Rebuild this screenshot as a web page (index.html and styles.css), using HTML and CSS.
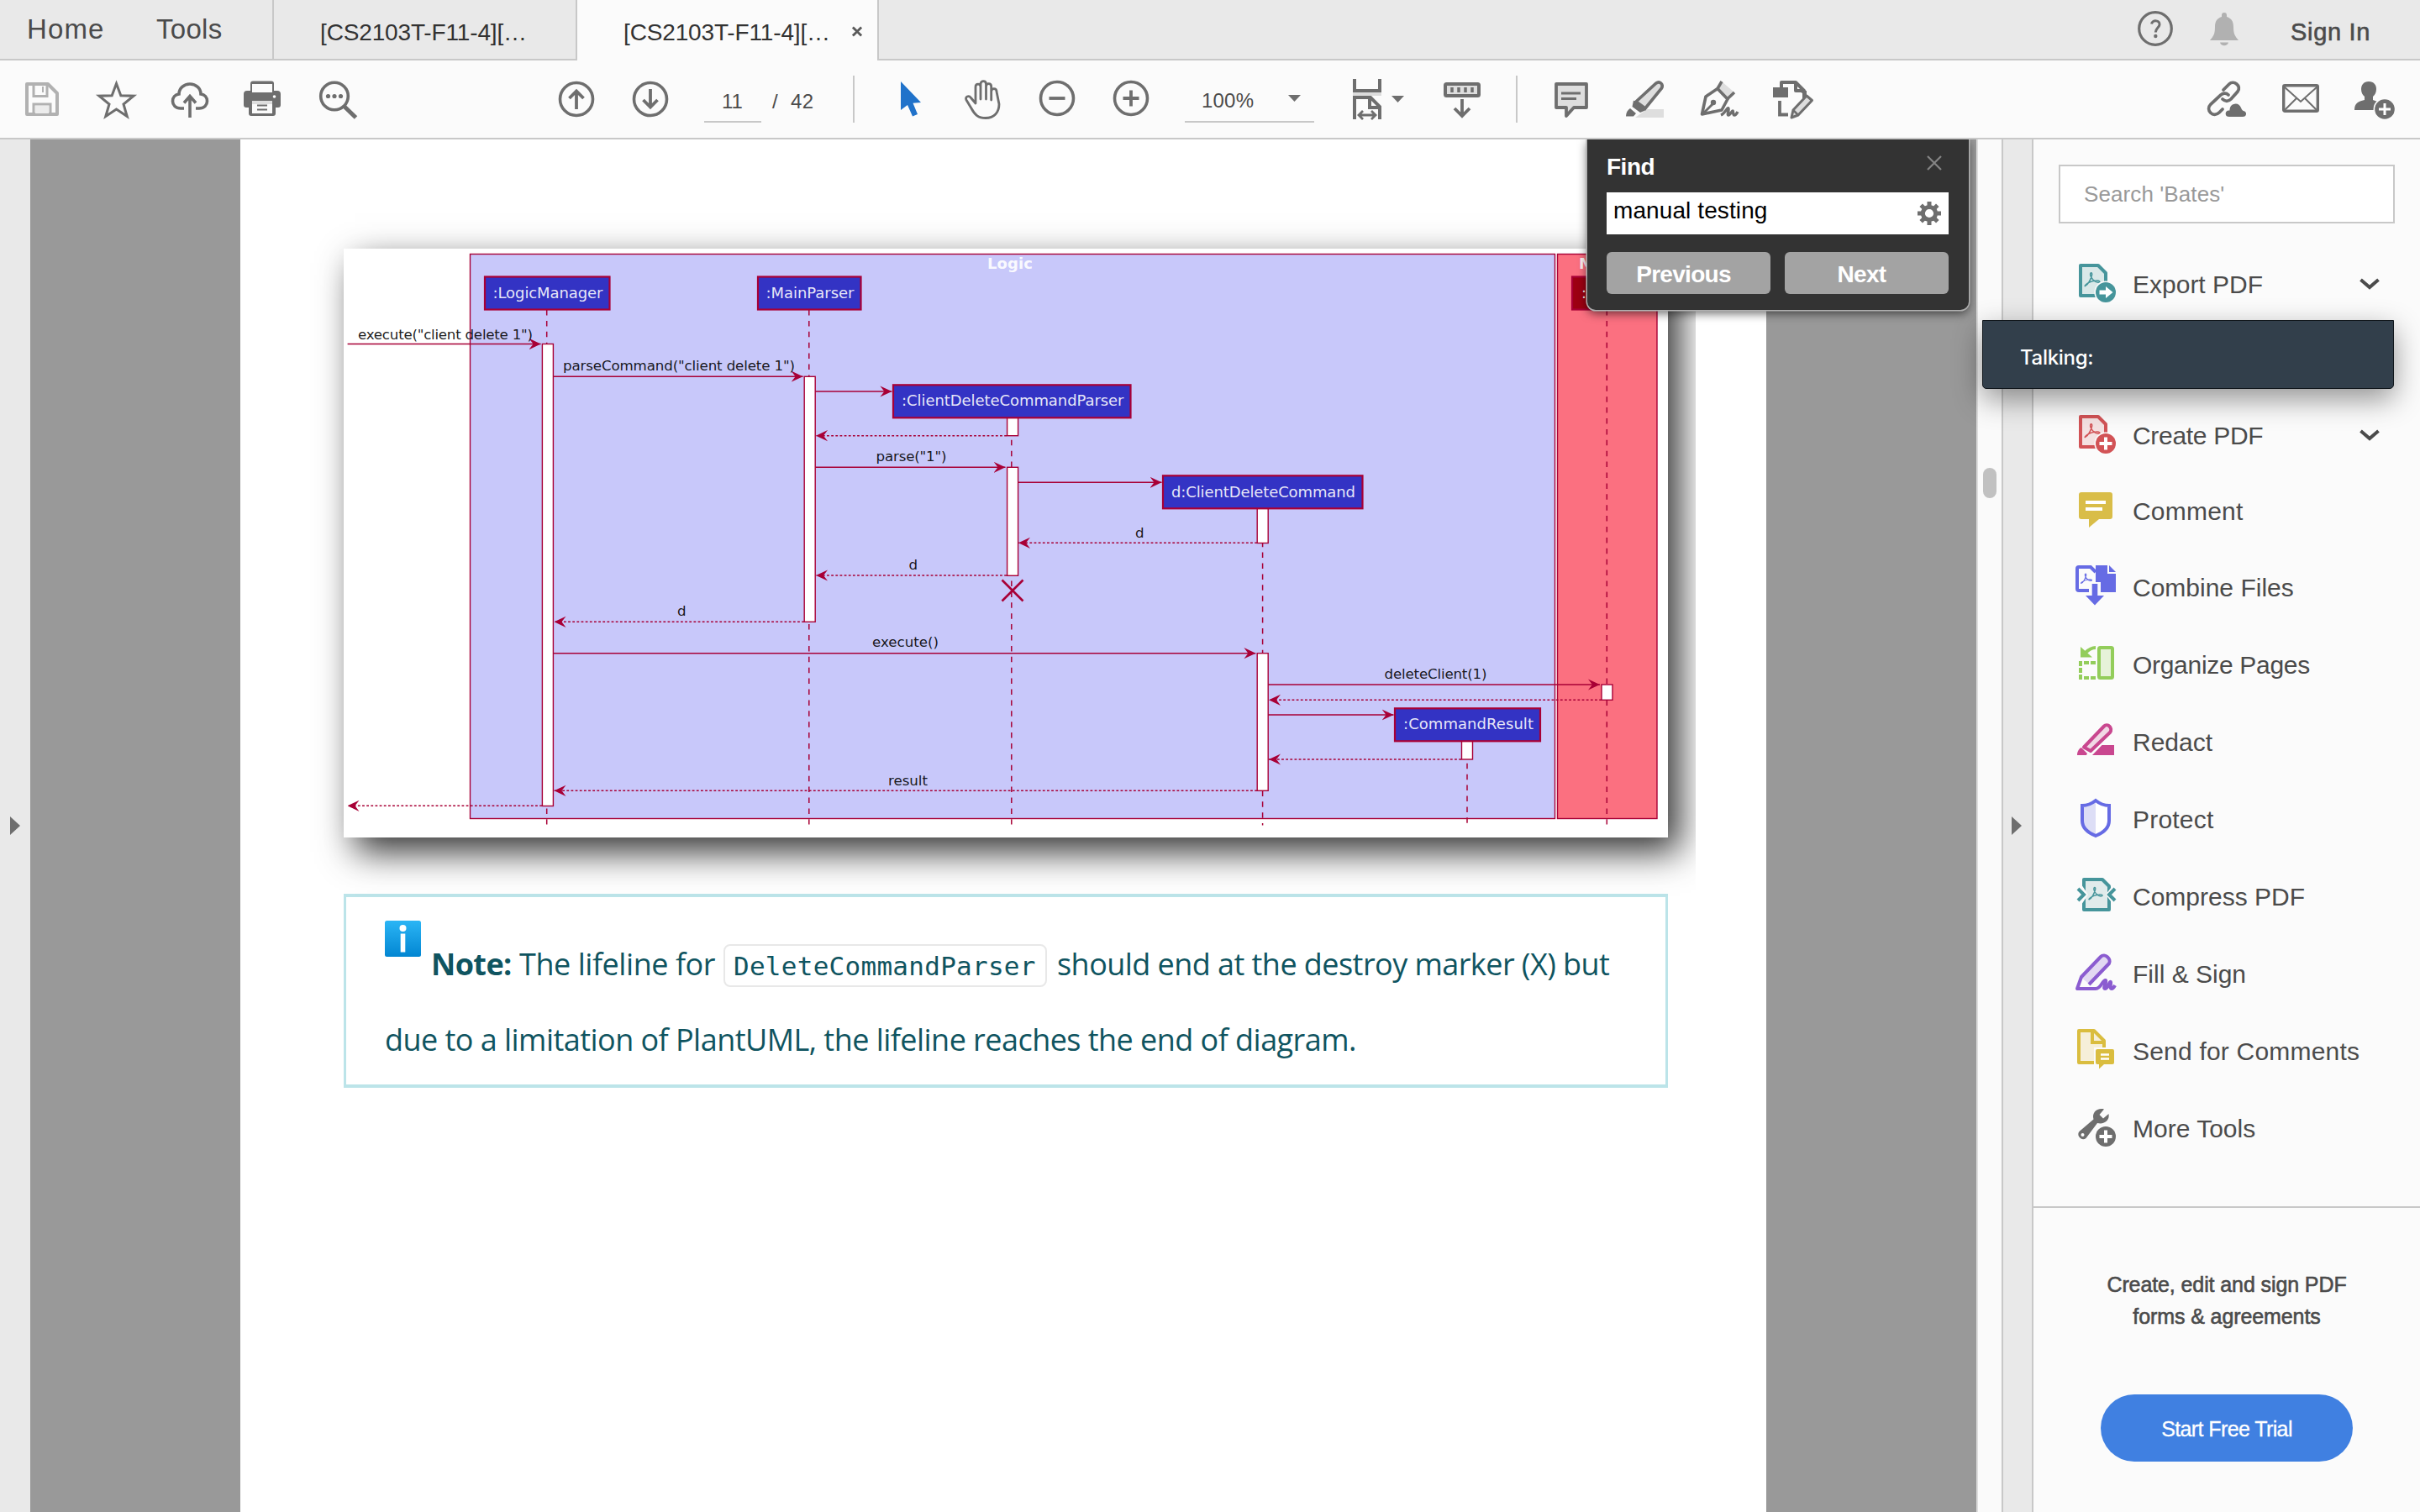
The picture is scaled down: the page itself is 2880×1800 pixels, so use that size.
FILE: index.html
```html
<!DOCTYPE html>
<html lang="en">
<head>
<meta charset="utf-8">
<title>Document viewer</title>
<link rel="stylesheet" href="styles.css">
</head>
<body>
<svg class="defs" width="0" height="0">
  <defs>
    <symbol id="acro" viewBox="0 0 24 24">
      <path d="M3 20c3-1 7-8 8.500-14 .8-4-2.500-4-2 0C10.500 11 16 16 20 15.500c3.500-.5 1-3-3-2.300C12 13.800 7 15.500 4 18c-2 1.800-1.800 2.500-1 2z" fill="none" stroke="currentColor" stroke-width="1.700"/>
    </symbol>
    <marker id="head" viewBox="0 0 14 14" refX="14" refY="7" markerWidth="14" markerHeight="14" markerUnits="userSpaceOnUse" orient="auto">
      <path d="M0 .4 14 7 0 13.600 5 7z" fill="#a80036"/>
    </marker>
  </defs>
</svg>

<header class="tabs">
  <nav class="home"><span class="nav-home">Home</span><span class="nav-tools">Tools</span></nav>
  <div class="tab"><span class="tab-name">[CS2103T-F11-4][…</span></div>
  <div class="tab active"><span class="tab-name">[CS2103T-F11-4][…</span>
    <svg class="tab-close" viewBox="0 0 14 14"><path d="M1.500 1.500l11 11M12.500 1.500l-11 11" stroke="#5a5a5a" stroke-width="3"/></svg>
  </div>
  <div class="account">
    <svg class="help" viewBox="0 0 42 42"><circle cx="21" cy="21" r="19.300" fill="none" stroke="#6e6e6e" stroke-width="3.200"/><path d="M16.500 15.500c1-5.500 10.500-4.500 9.500 1-.6 3.500-4.500 4-4.700 9" fill="none" stroke="#6e6e6e" stroke-width="3"/><circle cx="21.300" cy="30" r="2.200" fill="#6e6e6e"/></svg>
    <svg class="bell" viewBox="0 0 34 40"><path d="M14 3a3 3 0 0 1 6 0v2c6 2 8 6 8 12 0 9 2 11 6 16H0c4-5 6-7 6-16C6 11 8 7 14 5zM12 35.500h10c-1 5-9 5-10 0z" fill="#b1b1b1"/></svg>
    <span class="signin">Sign In</span>
  </div>
</header>

<div class="toolbar">
  <div class="group g-file">
    <svg class="ico" viewBox="0 0 48 48"><path d="M6 6h25l11 11v25H6z" fill="none" stroke="#b1b1b1" stroke-width="4" stroke-linejoin="round"/><path d="M14 6v14.500h16V6M14 42V30h20v12" fill="none" stroke="#b1b1b1" stroke-width="3"/><path d="M16 32h16v9H16z" fill="#ececec"/><path d="M25 9v7" stroke="#b1b1b1" stroke-width="2"/></svg>
    <svg class="ico" viewBox="0 0 48 48"><path d="M24.500 5.500l5.300 14.300 15.200.4L33 30l4.200 14.500L24.500 36 11.800 44.500 16 30 4 20.200l15.200-.4z" fill="none" stroke="#6e6e6e" stroke-width="3"/></svg>
    <svg class="ico" viewBox="0 0 48 48"><path d="M17 35h-4C7 35 3.500 31 3.500 26.500c0-4.500 3-8 7.500-8.500C11 11 17 6 24 6s13 5 13 12c4.500.5 7.500 4 7.500 8.500C44.500 31 41 35 35 35h-4" fill="none" stroke="#6e6e6e" stroke-width="3.600"/><path d="M24 46V22M17 28.500l7-8 7 8" fill="none" stroke="#6e6e6e" stroke-width="3.600"/></svg>
    <svg class="ico" viewBox="0 0 48 48"><path d="M8 14V5.500A3 3 0 0 1 11 2.500h22a3 3 0 0 1 3 3V14h4a4 4 0 0 1 4 4v13a3 3 0 0 1-3 3h-3v7a3 3 0 0 1-3 3H9a3 3 0 0 1-3-3v-7H3a3 3 0 0 1-3-3V18a4 4 0 0 1 4-4z" fill="#6e6e6e"/><path d="M10 6h24v10H10zM10 29h24v12H10z" fill="#fbfbfb"/><path d="M10 26h24v4H10z" fill="#dedede"/><path d="M16 31.500h12M16 36.500h12" stroke="#6e6e6e" stroke-width="2.200"/><circle cx="36.500" cy="21" r="1.800" fill="#fff"/></svg>
    <svg class="ico" viewBox="0 0 48 48"><circle cx="20" cy="20.500" r="16.300" fill="none" stroke="#6e6e6e" stroke-width="3.600"/><path d="M31 32l14.500 14" stroke="#6e6e6e" stroke-width="5"/><g fill="#6e6e6e"><circle cx="12.500" cy="20.500" r="2.600"/><circle cx="20" cy="20.500" r="2.600"/><circle cx="27.500" cy="20.500" r="2.600"/></g></svg>
  </div>
  <div class="group g-page">
    <svg class="ico" viewBox="0 0 48 48"><circle cx="24" cy="24" r="19.500" fill="none" stroke="#6e6e6e" stroke-width="3.600"/><path d="M24 36V14M15.500 23l8.500-8.500 8.500 8.500" fill="none" stroke="#6e6e6e" stroke-width="3.800"/></svg>
    <svg class="ico" viewBox="0 0 48 48"><circle cx="24" cy="24" r="19.500" fill="none" stroke="#6e6e6e" stroke-width="3.600"/><path d="M24 12v22M15.500 25l8.500 8.500 8.500-8.500" fill="none" stroke="#6e6e6e" stroke-width="3.800"/></svg>
    <span class="field page-no">11</span><span class="page-slash">/</span><span class="page-total">42</span>
  </div>
  <i class="divider"></i>
  <div class="group g-zoom">
    <svg class="ico" viewBox="0 0 48 48"><path d="M14 3l24 25-9.500.8L34 42l-6 2.500-6-13.500-8 6z" fill="#2072ca"/></svg>
    <svg class="ico" viewBox="0 0 48 48"><path d="M15 27V9.500c0-4.500 6-4.500 6 0V6c0-4.500 6.500-4.500 6.500 0v3c0-4.500 6.200-4.500 6.200 0v6c0-4.500 6.300-4.500 6.300 0L43 30c0 10-6 16.500-16 16.500-9 0-13-4-17-11.500L4 25c-2-4 3-6 5.500-2.500L15 29zM21 9.500V24M27.500 9V24M33.700 14v11" fill="none" stroke="#6e6e6e" stroke-width="2.800" stroke-linejoin="round" stroke-linecap="round"/></svg>
    <svg class="ico" viewBox="0 0 48 48"><circle cx="24" cy="23" r="19.500" fill="none" stroke="#6e6e6e" stroke-width="3.600"/><path d="M14.500 23h19" stroke="#6e6e6e" stroke-width="3.800"/></svg>
    <svg class="ico" viewBox="0 0 48 48"><circle cx="24" cy="23" r="19.500" fill="none" stroke="#6e6e6e" stroke-width="3.600"/><path d="M14.500 23h19M24 13.500v19" stroke="#6e6e6e" stroke-width="3.800"/></svg>
    <div class="field zoom-level"><span>100%</span><svg class="caret" viewBox="0 0 15 8"><path d="M0 0h15L7.500 8z" fill="#6e6e6e"/></svg></div>
  </div>
  <div class="group g-view">
    <svg class="ico fit" viewBox="0 0 48 48"><path d="M9 0v14h30V0" fill="none" stroke="#6e6e6e" stroke-width="4"/><path d="M7 16h34v4H7z" fill="#dcdcdc"/><path d="M9 48V22h19l11 11v15M27 22v12h12" fill="none" stroke="#6e6e6e" stroke-width="4"/><path d="M14 43h20M19 38l-5 5 5 5M29 38l5 5-5 5" fill="none" stroke="#6e6e6e" stroke-width="2.800"/></svg>
    <svg class="caret fit-caret" viewBox="0 0 15 8"><path d="M0 0h15L7.500 8z" fill="#6e6e6e"/></svg>
    <svg class="ico keys" viewBox="0 0 48 48"><rect x="4" y="6" width="40" height="14" rx="1.500" fill="#dedede" stroke="#6e6e6e" stroke-width="4"/><path d="M12 10v6M20 10v6M28 10v6M36 10v6" stroke="#6e6e6e" stroke-width="3.500"/><path d="M24 24v19M15 35l9 9 9-9" fill="none" stroke="#6e6e6e" stroke-width="3.800"/></svg>
  </div>
  <i class="divider"></i>
  <div class="group g-mark">
    <svg class="ico" viewBox="0 0 48 48"><path d="M6 6h36v28H27l-9 10V34H6z" fill="#dedede" stroke="#6e6e6e" stroke-width="3.800" stroke-linejoin="round"/><path d="M12 17h23M12 23.500h18" stroke="#6e6e6e" stroke-width="3"/></svg>
    <svg class="ico" viewBox="0 0 48 48"><path d="M26 36h20v10H12z" fill="#dedede"/><path d="M13 27L37 5c4-3 9 1 6.500 6L24 35z" fill="#dedede" stroke="#6e6e6e" stroke-width="3.600"/><path d="M10 25.500L25 37l-7 3-9.500-7zM6 35l7 6-3 3.500H1C1 40 3 37 6 35z" fill="#6e6e6e"/></svg>
    <svg class="ico" viewBox="0 0 48 48"><path d="M27 3l15 13-7 7-14-12z" fill="#dedede"/><path d="M27 3l-5 8.500M42 16l-8 7.500" stroke="#6e6e6e" stroke-width="3.500"/><path d="M3.500 42L8 21l14-9.500L34 24l-7 13z" fill="none" stroke="#6e6e6e" stroke-width="3.600" stroke-linejoin="round"/><path d="M4 42l13-13" stroke="#6e6e6e" stroke-width="3"/><circle cx="17" cy="28" r="3.200" fill="#6e6e6e"/><path d="M26 43c5-2 8-10 9-8s-2 8 0 8 4-5 5-5 0 5 2 5 3-2 4-4" fill="none" stroke="#6e6e6e" stroke-width="3.400"/></svg>
    <svg class="ico" viewBox="0 0 48 48"><path d="M10 10V4h17l10 10v9M27 4v10h10" fill="none" stroke="#6e6e6e" stroke-width="4" stroke-linejoin="round"/><path d="M0 10h18v12H0zM30 14h10v6z" fill="#6e6e6e"/><path d="M8 26v16.500h10" fill="none" stroke="#6e6e6e" stroke-width="3.800"/><path d="M22 46l2-9 16-17 6.500 5.500L30 43z" fill="#dedede" stroke="#6e6e6e" stroke-width="3" stroke-linejoin="round"/><path d="M24 37l6 6" stroke="#6e6e6e" stroke-width="2.500"/></svg>
  </div>
  <div class="group g-share">
    <svg class="ico" viewBox="0 0 48 48"><g fill="none" stroke="#6e6e6e" stroke-width="3.800" stroke-linecap="round"><path d="M20 13l7-7c5-5 15 2 10 9l-8 9c-3 3-7 3-10 0"/><path d="M26 19c-3-3-7-2-9 0L5 30c-7 7 3 17 10 10l4-4"/></g><path d="M27 46c-7 0-7-9-.5-9.500C27 28 38 25 42 34c1 2 .5 2.500 2 3 6 1.500 5 9-1 9z" fill="#6e6e6e" stroke="#fbfbfb" stroke-width="2"/></svg>
    <svg class="ico" viewBox="0 0 48 48"><rect x="3.700" y="7.700" width="40.600" height="30.600" rx="1.500" fill="none" stroke="#6e6e6e" stroke-width="3.400"/><path d="M4 9l20 18L44 9M4 38l15-15M44 38L29 23" fill="none" stroke="#6e6e6e" stroke-width="2"/></svg>
    <svg class="ico" viewBox="0 0 48 48"><path d="M17 3c6 0 9 4 9 9 0 4-1.500 7-4 9v4l8 3-5 9H0c0-8 4-10 12-12v-4c-2.500-2-4-5-4-9 0-5 3-9 9-9z" fill="#6e6e6e"/><circle cx="36" cy="36" r="13.500" fill="#fbfbfb"/><circle cx="36" cy="36" r="11.800" fill="#6e6e6e"/><path d="M29 36h14M36 29v14" stroke="#fff" stroke-width="3"/></svg>
  </div>
</div>

<main class="workspace">
  <div class="rail"><svg class="rail-arrow" viewBox="0 0 12 22"><path d="M0 0l12 11L0 22z" fill="#6e6e6e"/></svg></div>
  <section class="canvas">
    <article class="page">
      <figure class="diagram">
        <svg width="1576" height="701" viewBox="409 296 1576 701">
          <rect x="559.500" y="302.500" width="1291" height="672" fill="#c8c8fa" stroke="#a80036" stroke-width="1.400"/>
          <rect x="1853.500" y="302.500" width="118.500" height="672" fill="#fb7080" stroke="#a80036" stroke-width="1.400"/>
          <g class="frame-name"><text x="1175" y="320" textLength="54">Logic</text><text x="1879" y="320" textLength="62">Model</text></g>
          <g class="life">
            <path d="M650.700 369V981.500M962.800 369V981.500M1203.800 498V981.500M1502.600 606V982.500M1746 883V981M1912.300 369V981.500"/>
          </g>
          <g class="act">
            <rect x="645.400" y="409.500" width="13" height="550"/>
            <rect x="957.200" y="448.300" width="13" height="292"/>
            <rect x="1198.600" y="490" width="13" height="28.700"/>
            <rect x="1198.600" y="556.300" width="13" height="129"/>
            <rect x="1496.200" y="600" width="13" height="46.500"/>
            <rect x="1496.200" y="777.700" width="13" height="163.600"/>
            <rect x="1739.500" y="878" width="13" height="26"/>
            <rect x="1906" y="815" width="13" height="18.300"/>
          </g>
          <g class="obj">
            <rect x="577" y="329.500" width="148.500" height="39"/>
            <rect x="902" y="329.500" width="122.500" height="39"/>
            <rect x="1063" y="458.300" width="282.500" height="39"/>
            <rect x="1384" y="566.300" width="237.500" height="39"/>
            <rect x="1660" y="843.300" width="173" height="39"/>
            <rect class="model" x="1871" y="329.500" width="83" height="39"/>
          </g>
          <g class="obj-name">
            <text x="586.500" y="355" textLength="131">:LogicManager</text>
            <text x="911.500" y="355" textLength="105">:MainParser</text>
            <text x="1073" y="483.300" textLength="264.500">:ClientDeleteCommandParser</text>
            <text x="1394" y="591.500" textLength="219">d:ClientDeleteCommand</text>
            <text x="1670" y="868.300" textLength="155">:CommandResult</text>
            <text x="1882" y="355" textLength="62">:Model</text>
          </g>
          <g class="msg">
            <path d="M413.600 409.500H643.600"/><path d="M659 448.200H955.600"/><path d="M970.400 466H1061.400"/><path d="M970.400 556.300H1196.500"/><path d="M1211.600 574.300H1382.500"/><path d="M659 777.700H1494.400"/><path d="M1509 815H1904"/><path d="M1509 851H1658.500"/>
          </g>
          <g class="msg back">
            <path d="M1198 518.700H971"/><path d="M1496 646.300H1212"/><path d="M1198 685H971"/><path d="M957 740.300H659.500"/><path d="M1906 833.300H1510"/><path d="M1739 904H1510"/><path d="M1496 941.300H659.500"/><path d="M645 959.300H413.500"/>
          </g>
          <path d="M1192.500 690.500l25 25M1217.500 690.500l-25 25" stroke="#a80036" stroke-width="2.600"/>
          <g class="label">
            <text x="426" y="404" textLength="208">execute("client delete 1")</text>
            <text x="670" y="441.300" textLength="276">parseCommand("client delete 1")</text>
            <text x="1042.500" y="549.300" textLength="84">parse("1")</text>
            <text x="1351" y="640">d</text>
            <text x="1081.500" y="677.700">d</text>
            <text x="806" y="733.300">d</text>
            <text x="1038" y="770.300" textLength="79">execute()</text>
            <text x="1647.500" y="808" textLength="122">deleteClient(1)</text>
            <text x="1057" y="935.300" textLength="47">result</text>
          </g>
        </svg>
      </figure>
      <div class="note">
        <p class="note-line"><svg class="info" viewBox="0 0 43 43"><defs><linearGradient id="sky" x1="0" y1="0" x2="0" y2="1"><stop offset="0" stop-color="#2bb5f5"/><stop offset="1" stop-color="#0286d2"/></linearGradient></defs><rect width="43" height="43" rx="2.500" fill="url(#sky)"/><circle cx="21.500" cy="9" r="4" fill="#fff"/><rect x="18.700" y="15.500" width="5.600" height="22" fill="#fff"/></svg><b class="seg-note">Note:</b><span class="seg-a">The lifeline for</span><code>DeleteCommandParser</code><span class="seg-b">should end at the destroy marker (X) but</span></p>
        <p class="note-line"><span class="seg-c">due to a limitation of PlantUML, the lifeline reaches the end of diagram.</span></p>
      </div>
    </article>
    <form class="find">
      <div class="find-head"><b>Find</b><svg class="find-close" viewBox="0 0 18 18"><path d="M1 1l16 16M17 1L1 17" stroke="#858585" stroke-width="2.200"/></svg></div>
      <div class="find-input"><span>manual testing</span>
        <svg class="gear" viewBox="-14 -14 28 28"><circle r="7.600" fill="none" stroke="#6e6e6e" stroke-width="5"/><g stroke="#6e6e6e" stroke-width="5"><path d="M0-14v6M0 14V8M-14 0h6M14 0H8M-9.800-9.800l4 4M9.800 9.800l-4-4M-9.800 9.800l4-4M9.800-9.800l-4 4"/></g></svg>
      </div>
      <div class="find-btns"><span class="btn">Previous</span><span class="btn">Next</span></div>
    </form>
  </section>
  <div class="scroll"><i class="thumb"></i></div>
  <div class="rail right"><svg class="rail-arrow" viewBox="0 0 12 22"><path d="M0 0l12 11L0 22z" fill="#6e6e6e"/></svg></div>
  <aside class="panel">
    <div class="search">Search 'Bates'</div>
    <ul class="tools">
      <li class="tool teal"><svg class="tico" viewBox="0 0 48 48"><path d="M6 2h21l9 9v27H6z" fill="#d9e8e8" stroke="#46959b" stroke-width="4" stroke-linejoin="round"/><use href="#acro" x="9" y="8" width="22" height="22"/><circle cx="36" cy="34" r="13.600" fill="#fbfbfb"/><circle cx="36" cy="34" r="12" fill="#46959b"/><path d="M28.500 31.500H36V27l8.500 7-8.500 7v-4.500h-7.500z" fill="#fff"/></svg><span>Export PDF</span><svg class="chev" viewBox="0 0 24 14"><path d="M1.500 2L12 11 22.500 2" fill="none" stroke="#4b4b4b" stroke-width="4"/></svg></li>
      <li class="tool covered"></li>
      <li class="tool red"><svg class="tico" viewBox="0 0 48 48"><path d="M6 2h21l9 9v27H6z" fill="#f4e1e1" stroke="#d25356" stroke-width="4" stroke-linejoin="round"/><use href="#acro" x="9" y="8" width="22" height="22"/><circle cx="36" cy="34" r="13.600" fill="#fbfbfb"/><circle cx="36" cy="34" r="12" fill="#d25356"/><path d="M28.500 34h15M36 26.500v15" stroke="#fff" stroke-width="4"/></svg><span class="tight">Create PDF</span><svg class="chev" viewBox="0 0 24 14"><path d="M1.500 2L12 11 22.500 2" fill="none" stroke="#4b4b4b" stroke-width="4"/></svg></li>
      <li class="tool"><svg class="tico" viewBox="0 0 48 48"><path d="M7 2h34a3 3 0 0 1 3 3v26a3 3 0 0 1-3 3H28L16 44V34H7a3 3 0 0 1-3-3V5a3 3 0 0 1 3-3z" fill="#d9bd48"/><path d="M12 14h24M12 22h20" stroke="#fff" stroke-width="4"/></svg><span class="wide">Comment</span></li>
      <li class="tool tall violet"><svg class="tico" viewBox="0 0 48 48"><path d="M16 28H4a2 2 0 0 1-2-2V2a2 2 0 0 1 2-2h14l6 6" fill="none" stroke="#666be4" stroke-width="4"/><use href="#acro" x="5" y="6" width="16" height="16"/><path d="M24-2h14v10h10v22H30V18h-6zM40-2l8 8h-8z" fill="#666be4"/><path d="M19.700 20h6.600v14H34L23 45.500 12 34h7.700z" fill="#666be4"/></svg><span>Combine Files</span></li>
      <li class="tool tall"><svg class="tico" viewBox="0 0 48 48"><rect x="28" y="4" width="16" height="36" rx="1.500" fill="#e6f2d9" stroke="#93cd5b" stroke-width="4"/><path d="M24 22H6v18h18" fill="none" stroke="#93cd5b" stroke-width="4" stroke-dasharray="6 2"/><path d="M24 4c-5 0-8 2-12 6" fill="none" stroke="#93cd5b" stroke-width="4"/><path d="M6 3v12.500h14z" fill="#93cd5b"/></svg><span class="tight">Organize Pages</span></li>
      <li class="tool tall"><svg class="tico" viewBox="0 0 48 48"><path d="M10 30.500L34 5.500c4-4 11 2 7 7.500L18 35z" fill="#f1d8e5" stroke="#c9478f" stroke-width="4" stroke-linejoin="round"/><path d="M31.500 28H46v12H20zM7 31l7 7-1 2H2c0-4 2-8 5-9z" fill="#c9478f"/></svg><span>Redact</span></li>
      <li class="tool tall"><svg class="tico" viewBox="0 0 48 48"><path d="M24 2v42C14 40 8 35 8 26V8c6 0 11-2 16-6z" fill="#dddef6"/><path d="M24 2v42c10-4 16-9 16-18V8c-6 0-11-2-16-6z" fill="#fff"/><path d="M24 2c5 4 10 6 16 6v18c0 9-6 14-16 18C14 40 8 35 8 26V8c6 0 11-2 16-6z" fill="none" stroke="#666be4" stroke-width="4"/></svg><span class="wide">Protect</span></li>
      <li class="tool tall teal"><svg class="tico" viewBox="0 0 48 48"><path d="M10 4h22l8 8v28H10z" fill="#e0ebeb" stroke="#46959b" stroke-width="4" stroke-linejoin="round"/><path d="M7 10l8 12-8 12zM45 10l-9 12 9 12z" fill="#fbfbfb"/><use href="#acro" x="14" y="11" width="20" height="20"/><path d="M3 15l7 7-7 7M47 15l-7 7 7 7" fill="none" stroke="#46959b" stroke-width="4"/></svg><span>Compress PDF</span></li>
      <li class="tool tall"><svg class="tico" viewBox="0 0 48 48"><path d="M7 29L30 4c5-4 13 3 9 8L16 36z" fill="#e2d8f2"/><path d="M16 37L40 12c3-5-5-13-10-8L7 28 2 42h22c7 0 8-11 12-10 2 1-4 10-1 10 4 0 5-9 7-8 1 1-2 8 1 8 2 0 3-2 4-4" fill="none" stroke="#8b5cd0" stroke-width="4" stroke-linejoin="round"/></svg><span>Fill &amp; Sign</span></li>
      <li class="tool tall"><svg class="tico" viewBox="0 0 48 48"><path d="M22 38H4V0h18l12 12v10" fill="#f6efd9" stroke="#dabd3f" stroke-width="4" stroke-linejoin="round"/><path d="M20 0v14h14" fill="none" stroke="#dabd3f" stroke-width="4"/><path d="M22 20h26v22H34l-6 5h-6z" fill="#fbfbfb"/><path d="M26 22h18a2 2 0 0 1 2 2v14a2 2 0 0 1-2 2H34l-6 5.500V40h-2a2 2 0 0 1-2-2V24a2 2 0 0 1 2-2z" fill="#dabd3f"/><path d="M30 28.500h10M30 33.500h10" stroke="#fff" stroke-width="2.500"/></svg><span class="wide">Send for Comments</span></li>
      <li class="tool tall"><svg class="tico" viewBox="0 0 48 48"><path d="M34 1.500c-8-2-15 4-12.500 12L4.500 28c-4 5 3 12 8 8L26 18c8 2 15-3 13.500-11L33 12.500 28.500 8z" fill="#6e6e6e"/><circle cx="8.500" cy="32" r="2" fill="#fff"/><circle cx="36" cy="34" r="13.600" fill="#fbfbfb"/><circle cx="36" cy="34" r="12" fill="#6e6e6e"/><path d="M28.500 34h15M36 26.500v15" stroke="#fff" stroke-width="4"/></svg><span>More Tools</span></li>
    </ul>
    <footer class="promo">
      <p>Create, edit and sign PDF<br>forms &amp; agreements</p>
      <span class="trial">Start Free Trial</span>
    </footer>
  </aside>
</main>
<div class="talking">Talking:</div>
</body>
</html>
```
FILE: styles.css
```css
* { box-sizing: border-box; }
body {
  margin: 0;
  width: 2880px;
  height: 1800px;
  overflow: hidden;
  position: relative;
  display: flex;
  flex-direction: column;
  background: #fbfbfb;
  color: #4b4b4b;
  font-family: "Liberation Sans", Arial, sans-serif;
}
svg { display: block; flex: none; overflow: visible; }
.defs { position: absolute; }
p, ul, figure { margin: 0; padding: 0; list-style: none; }

/* Tab strip */
.tabs { display: flex; height: 72px; flex: none; background: #e9e9e9; box-shadow: inset 0 -2px #c8c8c8; }
.home { display: flex; width: 324px; padding-left: 32px; font-size: 33px; line-height: 69px; }
.nav-home { width: 154px; letter-spacing: 1.1px; }
.nav-tools { letter-spacing: .3px; }
.tab { display: flex; align-items: center; width: 361px; height: 72px; padding: 5px 0 0 55px; border-left: 2px solid #c8c8c8; color: #323232; }
.tab-name { width: 248px; font-size: 28px; letter-spacing: -.15px; white-space: nowrap; }
.tab.active { width: 361px; background: #fbfbfb; border-right: 2px solid #c8c8c8; }
.tab-close { width: 14px; height: 13px; margin: -2px 0 0 23px; }
.account { display: flex; align-items: flex-start; margin-left: auto; padding: 13px 58px 0 0; }
.help { width: 42px; height: 42px; }
.bell { width: 34px; height: 40px; margin: 2px 62px 0 44px; }
.signin { font-size: 29px; line-height: 34px; width: 96px; margin-top: 8px; letter-spacing: .7px; -webkit-text-stroke: .6px; white-space: nowrap; }

/* Toolbar */
.toolbar { display: flex; align-items: center; height: 94px; flex: none; padding: 0 10px 0 6px; background: #fbfbfb; border-bottom: 2px solid #c8c8c8; color: #4b4b4b; font-size: 24px; }
.group { display: flex; align-items: center; height: 92px; }
.ico { width: 48px; height: 48px; margin: 0 20px; }
.g-page { margin-left: 196px; }
.field { height: 56px; border-bottom: 2px solid #c8c8c8; }
.page-no { width: 68px; margin-left: 20px; padding-right: 1px; text-align: center; line-height: 61px; }
.page-slash { margin: 6px 0 0 13px; width: 22px; }
.page-total { margin-top: 6px; width: 74px; letter-spacing: .3px; }
.divider { width: 2px; height: 56px; background: #c8c8c8; }
.g-zoom { margin-left: 21px; }
.zoom-level { display: flex; align-items: center; width: 154px; margin-left: 20px; padding-left: 20px; }
.zoom-level span { width: 103px; margin-top: 5px; letter-spacing: .2px; }
.caret { width: 15px; height: 8px; }
.g-view { margin-left: 39px; }
.ico.fit { margin: 0; }
.fit-caret { margin-left: 5px; }
.ico.keys { margin: 0 40px 0 45px; }
.g-mark { margin-left: 20px; }
.g-share { margin-left: auto; }

/* Workspace */
.workspace { display: flex; flex: 1; min-height: 0; }
.rail { width: 36px; background: #e9e9e9; padding: 806px 0 0 12px; }
.rail-arrow { width: 12px; height: 22px; }
.rail.right { padding-left: 10px; border-right: 2px solid #c8c8c8; }
.canvas { position: relative; width: 2316px; background: #999; overflow: hidden; }
.page { width: 1816px; height: 100%; margin-left: 250px; padding: 130px 117px 0 123px; background: #fff; }
.diagram { width: 1576px; height: 701px; background: #fff; box-shadow: 14px 17px 40px rgba(0,0,0,.8); clip-path: inset(-60px -33px -70px -40px); }

/* Sequence diagram */
.diagram text { font-family: "DejaVu Sans", sans-serif; }
.frame-name text { font-size: 18px; font-weight: bold; fill: #fff; fill-opacity: .92; }
.life path { fill: none; stroke: #a80036; stroke-width: 1.5; stroke-dasharray: 6.5 6.4; }
.act rect { fill: #fff; stroke: #a80036; stroke-width: 1.4; }
.obj rect { fill: #3333c4; stroke: #a80036; stroke-width: 2.2; }
.obj .model { fill: #9d0012; }
.obj-name text { font-size: 18px; fill: #fff; fill-opacity: .9; }
.msg path { stroke: #a80036; stroke-width: 1.6; marker-end: url(#head); }
.msg.back path { stroke-dasharray: 2.8 2.35; }
.label text { font-size: 16.7px; fill: #000; fill-opacity: .9; }

/* Note box */
.note { margin-top: 67px; height: 231px; padding: 34px 0 0 46px; border: solid #bce4e9; border-width: 4px 3px; background: #fff; color: #0f5460; font: 36px "Open Sans", "Noto Sans", sans-serif; }
.note-line { display: flex; height: 90px; line-height: 92px; white-space: nowrap; }
.info { width: 43px; height: 43px; margin: -6px 12px 0 0; }
.seg-note { width: 105px; letter-spacing: -.6px; }
.seg-a { width: 243px; letter-spacing: -.45px; }
.seg-b { letter-spacing: -.55px; }
.seg-c { letter-spacing: -.54px; }
.note code { height: 51px; width: 385px; margin: 22px 12px 0 0; padding-left: 10px; border: 2px solid #e8e8e8; border-radius: 8px; font: 31px/48px "DejaVu Sans Mono", monospace; letter-spacing: .27px; }

/* Find box */
.find { position: absolute; top: 0; left: 1853px; width: 454px; height: 203px; padding: 24px 24px 0 23px; background: #333; border-radius: 0 0 10px 10px; box-shadow: 0 0 0 1.5px #b0b0b0, 0 4px 12px rgba(0,0,0,.6); }
.find-head { display: flex; justify-content: space-between; height: 39px; padding-right: 8px; color: #fff; font-size: 28px; line-height: 16px; }
.find-head b { line-height: 17px; letter-spacing: -.5px; }
.find-close { width: 18px; height: 18px; margin-top: -5px; }
.find-input { display: flex; align-items: center; justify-content: space-between; height: 50px; padding: 0 9px 0 8px; background: #fff; color: #000; font-size: 28px; }
.find-input span { margin-top: -7px; letter-spacing: .1px; }
.gear { width: 28px; height: 28px; }
.find-btns { display: flex; justify-content: space-between; margin-top: 21px; }
.btn { width: 195px; height: 50px; border-radius: 6px; background: #a3a3a3; color: #fff; font-size: 28px; font-weight: bold; line-height: 53px; text-align: center; letter-spacing: -.7px; padding-right: 12px; }

/* Scroll bar */
.scroll { width: 32px; background: #fafafa; border-left: 2px solid #ddd; border-right: 2px solid #c8c8c8; padding: 391px 0 0 6px; }
.thumb { display: block; width: 16px; height: 36px; border-radius: 8px; background: #c1c1c1; }

/* Tools panel */
.panel { width: 460px; padding-top: 30px; background: #fbfbfb; display: flex; flex-direction: column; }
.search { width: 400px; height: 70px; margin-left: 30px; padding-left: 28px; flex: none; border: 2px solid #c8c8c8; background: #fff; color: #999; font-size: 26px; line-height: 66px; letter-spacing: .1px; }
.tools { height: 1170px; padding: 27px 0 0 50px; flex: none; }
.tool { display: flex; align-items: center; height: 90px; font-size: 30px; }
.tool.tall { height: 92px; }
.tico { width: 48px; height: 48px; margin-right: 20px; }
.tool span { width: 270px; padding-top: 1px; white-space: nowrap; }
.tool .tight { letter-spacing: -.3px; }
.tool .wide { letter-spacing: .2px; }
.chev { width: 24px; height: 14px; }
.teal .tico { color: #46959b; }
.red .tico { color: #d25356; }
.violet .tico { color: #666be4; }
.promo { flex: 1; display: flex; flex-direction: column; align-items: center; padding: 72px 0 0; border-top: 2px solid #c8c8c8; font-size: 25px; line-height: 38px; text-align: center; }
.promo p { -webkit-text-stroke: .6px; letter-spacing: -.1px; }
.trial { width: 300px; height: 80px; margin-top: 74px; border-radius: 40px; background: #4080e1; color: #fff; line-height: 82px; letter-spacing: -.6px; -webkit-text-stroke: .3px; }

/* Floating speaker overlay */
.talking { position: absolute; left: 2359px; top: 381px; width: 490px; height: 82px; padding-left: 44px; border: 1px solid #10161b; border-radius: 0 0 5px 5px; background: #323f4b; color: #fff; font: 500 24px/88px Inter, sans-serif; letter-spacing: -.3px; box-shadow: 0 12px 34px rgba(0,0,0,.42); }
```
